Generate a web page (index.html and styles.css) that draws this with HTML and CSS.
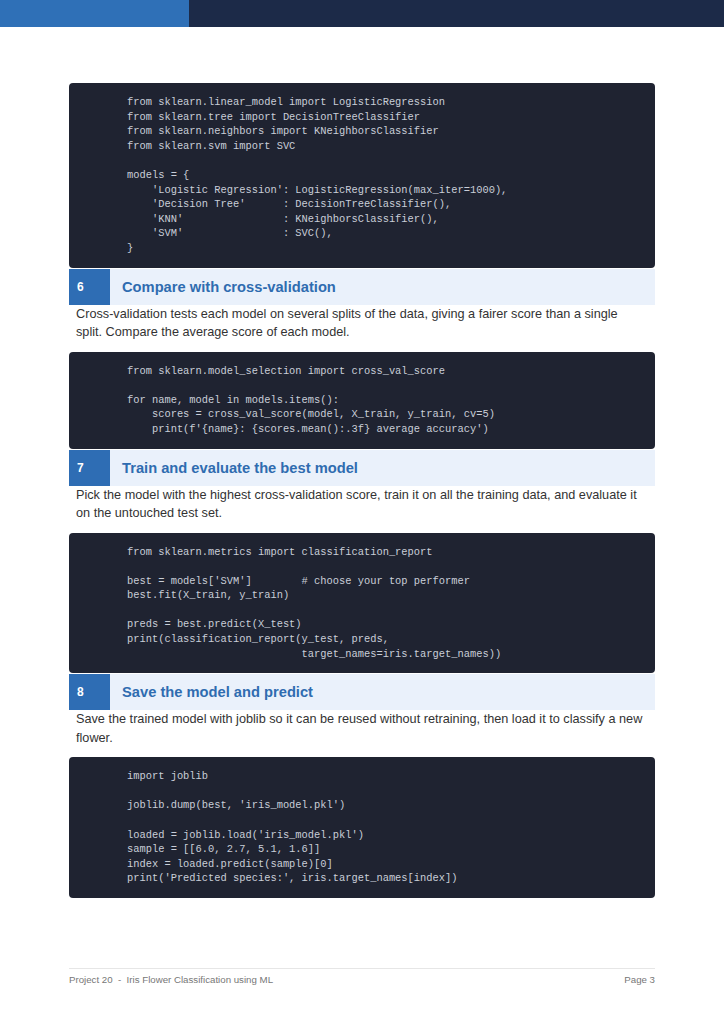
FILE: index.html
```html
<!DOCTYPE html>
<html>
<head>
<meta charset="utf-8">
<link rel="stylesheet" href="styles.css">
</head>
<body>
<div class="topbar"><div class="topbar-accent"></div><div class="topbar-main"></div></div>
<main class="content">
<pre class="code">from sklearn.linear_model import LogisticRegression
from sklearn.tree import DecisionTreeClassifier
from sklearn.neighbors import KNeighborsClassifier
from sklearn.svm import SVC

models = {
    'Logistic Regression': LogisticRegression(max_iter=1000),
    'Decision Tree'      : DecisionTreeClassifier(),
    'KNN'                : KNeighborsClassifier(),
    'SVM'                : SVC(),
}</pre>
<div class="step"><span class="step-num">6</span><h2 class="step-title">Compare with cross-validation</h2></div>
<p class="text">Cross-validation tests each model on several splits of the data, giving a fairer score than a single split. Compare the average score of each model.</p>
<pre class="code">from sklearn.model_selection import cross_val_score

for name, model in models.items():
    scores = cross_val_score(model, X_train, y_train, cv=5)
    print(f'{name}: {scores.mean():.3f} average accuracy')</pre>
<div class="step"><span class="step-num">7</span><h2 class="step-title">Train and evaluate the best model</h2></div>
<p class="text">Pick the model with the highest cross-validation score, train it on all the training data, and evaluate it on the untouched test set.</p>
<pre class="code">from sklearn.metrics import classification_report

best = models['SVM']        # choose your top performer
best.fit(X_train, y_train)

preds = best.predict(X_test)
print(classification_report(y_test, preds,
                            target_names=iris.target_names))</pre>
<div class="step"><span class="step-num">8</span><h2 class="step-title">Save the model and predict</h2></div>
<p class="text">Save the trained model with joblib so it can be reused without retraining, then load it to classify a new flower.</p>
<pre class="code">import joblib

joblib.dump(best, 'iris_model.pkl')

loaded = joblib.load('iris_model.pkl')
sample = [[6.0, 2.7, 5.1, 1.6]]
index = loaded.predict(sample)[0]
print('Predicted species:', iris.target_names[index])</pre>
</main>
<footer class="footer"><span class="footer-title">Project 20  -  Iris Flower Classification using ML</span><span class="footer-page">Page 3</span></footer>
</body>
</html>
```
FILE: styles.css
```css
html, body {
  margin: 0;
  padding: 0;
  background: #ffffff;
}
body {
  font-family: "Liberation Sans", Arial, sans-serif;
  color: #333333;
  width: 724px;
}
.topbar {
  display: flex;
  height: 27px;
}
.topbar-accent {
  width: 189px;
  background: #2f70b7;
}
.topbar-main {
  flex: 1;
  background: #1c2a48;
}
.content {
  padding: 56px 69px 0;
}
.code {
  margin: 0;
  background: #1f2331;
  color: #c9ced8;
  border-radius: 4px;
  padding: 12px 12px 12px 58px;
  font-family: "Liberation Mono", "Courier New", monospace;
  font-size: 10.4px;
  line-height: 14.6px;
  white-space: pre;
}
.step {
  display: flex;
  align-items: center;
  height: 36px;
  margin-top: 1px;
  background: #eaf1fb;
}
.step-num {
  align-self: stretch;
  width: 41px;
  box-sizing: border-box;
  padding-left: 8px;
  display: flex;
  align-items: center;
  background: #2e6db4;
  color: #ffffff;
  font-weight: bold;
  font-size: 12px;
}
.step-title {
  margin: 0 0 0 12px;
  font-size: 14.7px;
  font-weight: bold;
  color: #2f6cb0;
}
.text {
  margin: 0 0 10px;
  padding: 0 9px 0 7px;
  font-size: 12.7px;
  line-height: 18.5px;
  color: #333333;
}
.footer {
  margin: 70px 69px 0;
  border-top: 1px solid #e6e6e6;
  padding-top: 5px;
  display: flex;
  justify-content: space-between;
  font-size: 9.7px;
  line-height: 12px;
  color: #777777;
}
.footer-title {
  white-space: pre;
}
```
